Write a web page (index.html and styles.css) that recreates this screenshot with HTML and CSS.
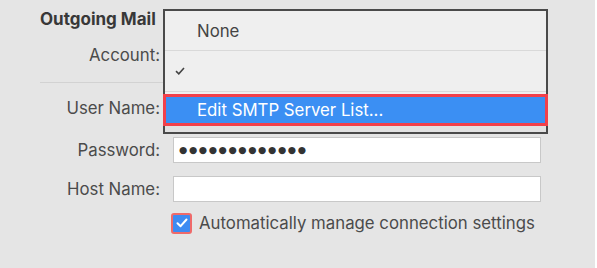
FILE: index.html
```html
<!DOCTYPE html>
<html lang="en">
<head>
  <meta charset="UTF-8">
  <title>Outgoing Mail</title>
  <link rel="stylesheet" href="styles.css">
</head>
<body>
  <div class="pane">
    <div class="title">Outgoing Mail</div>

    <div class="row row-account">
      <span class="label">Account:</span>
      <div class="popup"></div>
    </div>
    <div class="sep"></div>

    <div class="row row-user">
      <span class="label">User Name:</span>
      <div class="field"></div>
    </div>
    <div class="row row-pass">
      <span class="label">Password:</span>
      <div class="field field-pass">●●●●●●●●●●●●●</div>
    </div>
    <div class="row row-host">
      <span class="label">Host Name:</span>
      <div class="field"></div>
    </div>

    <div class="row row-check">
      <span class="label"></span>
      <span class="checkbox">
        <svg width="12" height="10" viewBox="0 0 12 10"><path d="M1.5 5.2 L4.6 8.2 L10.5 1.5" fill="none" stroke="#fff" stroke-width="2" stroke-linecap="round" stroke-linejoin="round"/></svg>
      </span>
      <span class="check-text">Automatically manage connection settings</span>
    </div>

    <!-- popup menu of the Account control -->
    <div class="menu">
      <div class="menu-item">None</div>
      <div class="menu-div"></div>
      <div class="menu-item menu-checked">
        <svg width="10" height="8" viewBox="0 0 10 8"><path d="M1 4.2 L3.8 6.8 L9 1" fill="none" stroke="#444" stroke-width="1.6"/></svg>
      </div>
      <div class="menu-div"></div>
      <div class="menu-item menu-active">Edit SMTP Server List...</div>
      <div class="menu-foot"></div>
    </div>
  </div>
</body>
</html>
```

FILE: styles.css
```css
body {
  margin: 0;
  background: #fff;
  font-family: "Inter", "Liberation Sans", sans-serif;
  color: #4b4b4b;
}
.pane {
  position: relative;
  width: 595px;
  height: 268px;
  background: #e5e5e5;
  padding-top: 8px;
  box-sizing: border-box;
}
.title {
  padding-left: 40px;
  font-size: 17px;
  font-weight: 700;
  line-height: 22px;
  color: #383838;
}

/* form rows */
.row {
  display: flex;
  align-items: center;
  gap: 13px;
  height: 26px;
}
.label {
  width: 160px;
  flex-shrink: 0;
  text-align: right;
  font-size: 16.8px;
}
.row-account {
  margin-top: 12px;
}
.popup {
  width: 368px;
  height: 22px;
}
.sep {
  margin: 14px 0 0 40px;
  width: 123px;
  height: 1px;
  background: #d2d2d2;
}
.row-user {
  margin-top: 12px;
}
.row-pass {
  margin-top: 16px;
}
.row-host {
  margin-top: 13px;
}
.field {
  width: 368px;
  height: 26px;
  box-sizing: border-box;
  background: #fff;
  border: 1px solid #c8c8c8;
}
.field-pass {
  padding-left: 5px;
  font-family: "DejaVu Sans", sans-serif;
  font-size: 9.5px;
  line-height: 24px;
  letter-spacing: 1.6px;
  color: #333;
}
.row-check {
  margin-top: 10px;
  height: 22px;
  gap: 0;
}
.checkbox {
  display: flex;
  align-items: center;
  justify-content: center;
  width: 21px;
  height: 21px;
  margin-left: 11px;
  box-sizing: border-box;
  border: 2px solid #ef6a6a;
  border-radius: 3px;
  background: #3d8bf2;
}
.check-text {
  margin-left: 7px;
  font-size: 16.8px;
}

/* popup menu */
.menu {
  position: absolute;
  left: 163px;
  top: 9px;
  width: 385px;
  height: 125px;
  box-sizing: border-box;
  border: 2px solid #4a4a4a;
  background: #efefef;
  display: flex;
  flex-direction: column;
}
.menu-item {
  height: 38px;
  display: flex;
  align-items: center;
  padding-left: 32px;
  font-size: 16.8px;
  color: #444;
}
.menu-item:first-child {
  height: 39px;
}
.menu-checked {
  height: 40px;
  padding-left: 10px;
}
.menu-div {
  height: 1px;
  background: #d9d9d9;
}
.menu-active {
  height: 32px;
  margin: 2px -2px 0 -2px;
  padding-left: 31px;
  box-sizing: border-box;
  border: 3px solid #f2404a;
  background: #3b8ff3;
  color: #fff;
}
.menu-foot {
  flex: 1;
  background: #e2e2e2;
}
```
